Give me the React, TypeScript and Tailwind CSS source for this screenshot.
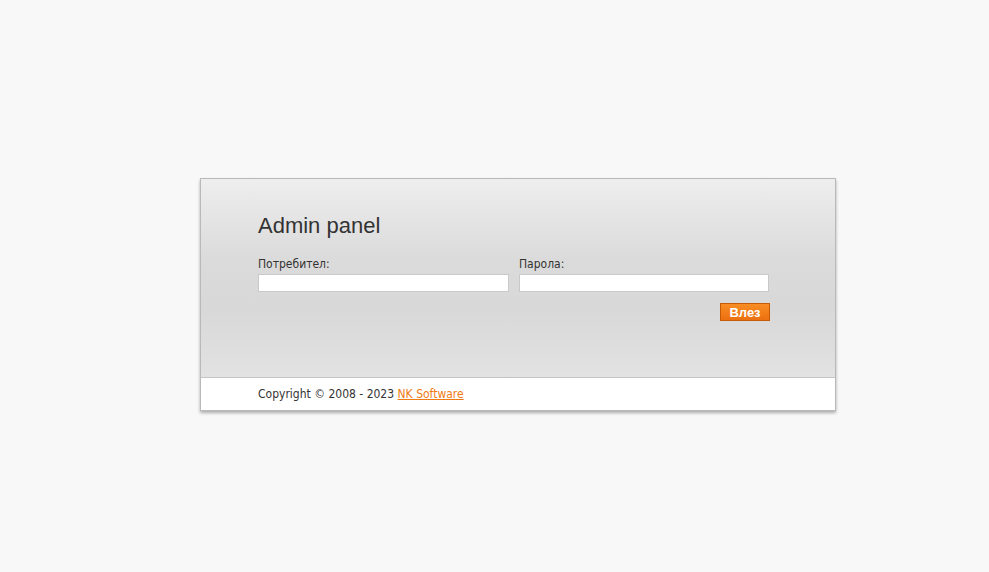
export default function App() {
  return (
    <div className="min-h-[572px] bg-[#f8f8f8] pt-[178px] pl-[200px]">
      <div className="w-[636px] border border-[#b9b9b9] shadow-[0_2px_3px_rgba(0,0,0,0.3)]">
        <div className="h-[198px] bg-[linear-gradient(to_bottom,#efeeee_0%,#dcdbdb_40%,#d9d8d8_65%,#e2e2e2_100%)] pl-[57px] pt-[32px]">
          <h1 className="text-[22px] leading-[30px] text-[#333] font-['Liberation_Sans',Arial,sans-serif]">
            Admin panel
          </h1>
          <div className="mt-[16px] flex gap-[10px] font-['DejaVu_Sans_Condensed','DejaVu_Sans',sans-serif] text-[12px] text-[#333]">
            <label className="flex flex-col">
              <span className="leading-[14px] mb-[3px]">Потребител:</span>
              <input
                type="text"
                className="w-[251px] h-[18px] bg-white border border-[#c9c9c9] outline-none"
              />
            </label>
            <label className="flex flex-col">
              <span className="leading-[14px] mb-[3px]">Парола:</span>
              <input
                type="password"
                className="w-[250px] h-[18px] bg-white border border-[#c9c9c9] outline-none"
              />
            </label>
          </div>
          <div className="mt-[11px] w-[512px] flex justify-end">
            <button className="w-[50px] h-[18px] border border-[#c65a05] bg-[linear-gradient(to_bottom,#f98d24,#ec7010)] text-white font-bold text-[13px] leading-[15px] font-['Liberation_Sans',Arial,sans-serif]">
              Влез
            </button>
          </div>
        </div>
        <div className="border-t border-[#c4c4c4] bg-white h-[33px] pl-[57px] flex items-center">
          <p className="font-['DejaVu_Sans_Condensed','DejaVu_Sans',sans-serif] text-[12px] text-[#333]">
            Copyright © 2008 - 2023{" "}
            <a href="#" className="text-[#f07a14] underline">
              NK Software
            </a>
          </p>
        </div>
      </div>
    </div>
  );
}
